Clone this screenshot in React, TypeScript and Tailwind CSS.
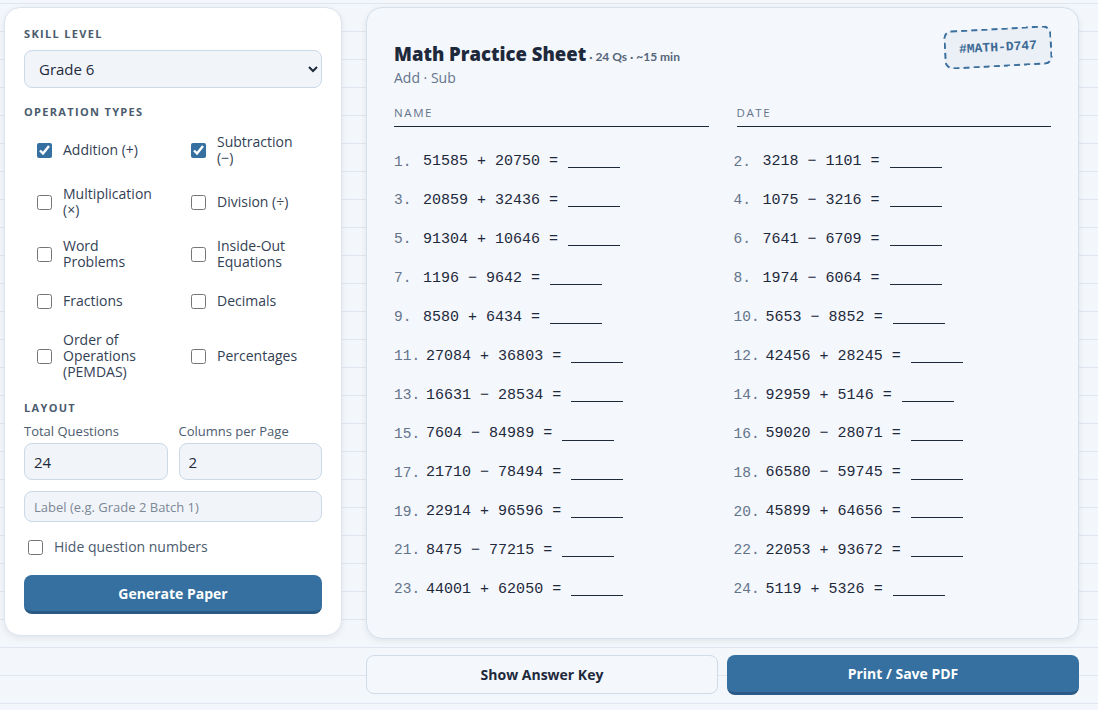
import { useState } from "react";

const questions: string[] = [
  "51585 + 20750",
  "3218 − 1101",
  "20859 + 32436",
  "1075 − 3216",
  "91304 + 10646",
  "7641 − 6709",
  "1196 − 9642",
  "1974 − 6064",
  "8580 + 6434",
  "5653 − 8852",
  "27084 + 36803",
  "42456 + 28245",
  "16631 − 28534",
  "92959 + 5146",
  "7604 − 84989",
  "59020 − 28071",
  "21710 − 78494",
  "66580 − 59745",
  "22914 + 96596",
  "45899 + 64656",
  "8475 − 77215",
  "22053 + 93672",
  "44001 + 62050",
  "5119 + 5326",
];

const operations = [
  { label: "Addition (+)", checked: true },
  { label: "Subtraction (−)", checked: true },
  { label: "Multiplication (×)", checked: false },
  { label: "Division (÷)", checked: false },
  { label: "Word Problems", checked: false },
  { label: "Inside-Out Equations", checked: false },
  { label: "Fractions", checked: false },
  { label: "Decimals", checked: false },
  { label: "Order of Operations (PEMDAS)", checked: false },
  { label: "Percentages", checked: false },
];

const sans = "font-['Open_Sans',sans-serif]";
const mono = "font-['Liberation_Mono','DejaVu_Sans_Mono',monospace]";
const display = "font-['Lato','Open_Sans',sans-serif]";

function SectionLabel({ children }: { children: React.ReactNode }) {
  return (
    <div className="text-[11px] leading-4 font-bold uppercase tracking-[0.12em] text-[#4b5b6e]">
      {children}
    </div>
  );
}

export default function App() {
  const [ops, setOps] = useState(operations.map((o) => o.checked));
  const [hideNumbers, setHideNumbers] = useState(false);

  return (
    <div
      className={`${sans} h-[710px] min-h-screen overflow-hidden bg-[#f3f6fa] bg-[linear-gradient(to_bottom,transparent_3px,#dfe6ef_3px,#dfe6ef_4px,transparent_4px)] bg-[length:100%_28px]`}
    >
      <div className="flex items-start gap-[24px] pl-[4px] pt-[7px]">
        {/* settings panel */}
        <aside className="w-[338px] rounded-2xl border border-[#dce4ee] bg-white px-[19px] pt-[18px] pb-[21px] shadow-[0_2px_6px_rgba(30,50,80,0.08)]">
          <SectionLabel>Skill Level</SectionLabel>
          <select
            defaultValue="6"
            className="mt-2 h-[38px] w-full rounded-lg border border-[#cbd8e6] bg-[#f1f5fa] pl-[10px] pr-2 text-[15px] text-[#1e293b] outline-none"
          >
            {[1, 2, 3, 4, 5, 6, 7, 8].map((g) => (
              <option key={g} value={String(g)}>
                Grade {g}
              </option>
            ))}
          </select>

          <div className="mt-4">
            <SectionLabel>Operation Types</SectionLabel>
          </div>
          <div className="mt-[4px] grid grid-cols-2 gap-x-[10px]">
            {operations.map((op, i) => (
              <label
                key={op.label}
                className="flex min-h-[42px] cursor-pointer items-center gap-[11px] py-[10px] pl-[13px] pr-[10px]"
              >
                <input
                  type="checkbox"
                  checked={ops[i]}
                  onChange={() =>
                    setOps(ops.map((v, j) => (j === i ? !v : v)))
                  }
                  className="m-0 h-[15px] w-[15px] shrink-0 accent-[#3570a0]"
                />
                <span className="text-[14px] leading-4 text-[#334155]">
                  {op.label}
                </span>
              </label>
            ))}
          </div>

          <div className="mt-[10px]">
            <SectionLabel>Layout</SectionLabel>
          </div>
          <div className="mt-[7px] grid grid-cols-2 gap-x-[11px]">
            <div>
              <div className="text-[13px] leading-4 text-[#4b5b6e]">
                Total Questions
              </div>
              <input
                defaultValue="24"
                className="mt-1 h-[37px] w-full rounded-lg border border-[#cbd8e6] bg-[#f1f5fa] px-[9px] text-[15px] text-[#1e293b] outline-none"
              />
            </div>
            <div>
              <div className="text-[13px] leading-4 text-[#4b5b6e]">
                Columns per Page
              </div>
              <input
                defaultValue="2"
                className="mt-1 h-[37px] w-full rounded-lg border border-[#cbd8e6] bg-[#f1f5fa] px-[9px] text-[15px] text-[#1e293b] outline-none"
              />
            </div>
          </div>
          <input
            placeholder="Label (e.g. Grade 2 Batch 1)"
            className="mt-[11px] h-[31px] w-full rounded-lg border border-[#cbd8e6] bg-[#f1f5fa] px-[9px] text-[13px] text-[#1e293b] outline-none placeholder:text-[#7c8796]"
          />

          <label className="mt-[10px] flex h-[30px] cursor-pointer items-center gap-[11px] pl-[4px]">
            <input
              type="checkbox"
              checked={hideNumbers}
              onChange={() => setHideNumbers(!hideNumbers)}
              className="m-0 h-[15px] w-[15px] accent-[#3570a0]"
            />
            <span className="text-[14px] leading-4 text-[#4b5b6e]">
              Hide question numbers
            </span>
          </label>

          <button className="mt-[13px] h-[39px] w-full rounded-lg border-b-[3px] border-[#2a5a85] bg-[#3570a0] text-[14px] font-bold text-white">
            Generate Paper
          </button>
        </aside>

        {/* preview */}
        <main className="w-[713px]">
          <section className="relative rounded-2xl border border-[#d5e0eb] bg-[#f4f7fb] px-[27px] pt-[34px] pb-[28px] shadow-[0_2px_6px_rgba(30,50,80,0.08)]">
            <div
              className={`${mono} absolute top-[20px] right-[26px] -rotate-3 rounded-lg border-2 border-dashed border-[#3a6f9e] bg-[#ebf0f6] px-[13px] py-[8px] text-[13px] leading-[19px] font-bold text-[#3d6a94]`}
            >
              #MATH-D747
            </div>

            <div className="flex h-[24px] items-baseline gap-[3px] leading-6">
              <h1 className="text-[18.5px] font-extrabold text-[#1e293b]">
                Math Practice Sheet
              </h1>
              <span className={`${display} text-[12px] font-bold text-[#55657a]`}>
                · 24 Qs · ~15 min
              </span>
            </div>
            <div className="mt-[4px] text-[14px] leading-4 text-[#64748b]">
              Add · Sub
            </div>

            <div className="mt-[19px] grid grid-cols-2 gap-x-[28px]">
              {["Name", "Date"].map((f) => (
                <div
                  key={f}
                  className="border-b-[1.5px] border-[#1e293b] pb-[5px] text-[11.5px] leading-4 uppercase tracking-[0.14em] text-[#64748b]"
                >
                  {f}
                </div>
              ))}
            </div>

            <div className="mt-[16px] grid grid-cols-2 gap-x-[22px]">
              {questions.map((q, i) => (
                <div
                  key={i}
                  className={`${mono} flex h-[38.9px] items-center whitespace-pre text-[15px] text-[#1e293b]`}
                >
                  {!hideNumbers && (
                    <span className="mr-[6px] inline-block min-w-[23px] text-[14.5px] text-[#64748b]">
                      {`${i + 1}.`}
                    </span>
                  )}
                  <span>{`${q} = `}</span>
                  <span className="ml-[1px] inline-block h-[16px] w-[52px] translate-y-[-2px] border-b-[1.5px] border-[#1e293b]" />
                </div>
              ))}
            </div>
          </section>

          <div className="mt-[16px] grid grid-cols-2 gap-x-[9px]">
            <button className="h-[39px] rounded-lg border border-[#cfdbe8] bg-[#f4f7fb] text-[14px] font-bold text-[#1e293b]">
              Show Answer Key
            </button>
            <button className="h-[40px] rounded-lg border-b-[3px] border-[#2a5a85] bg-[#3570a0] text-[14px] font-bold text-white">
              Print / Save PDF
            </button>
          </div>
        </main>
      </div>
    </div>
  );
}
